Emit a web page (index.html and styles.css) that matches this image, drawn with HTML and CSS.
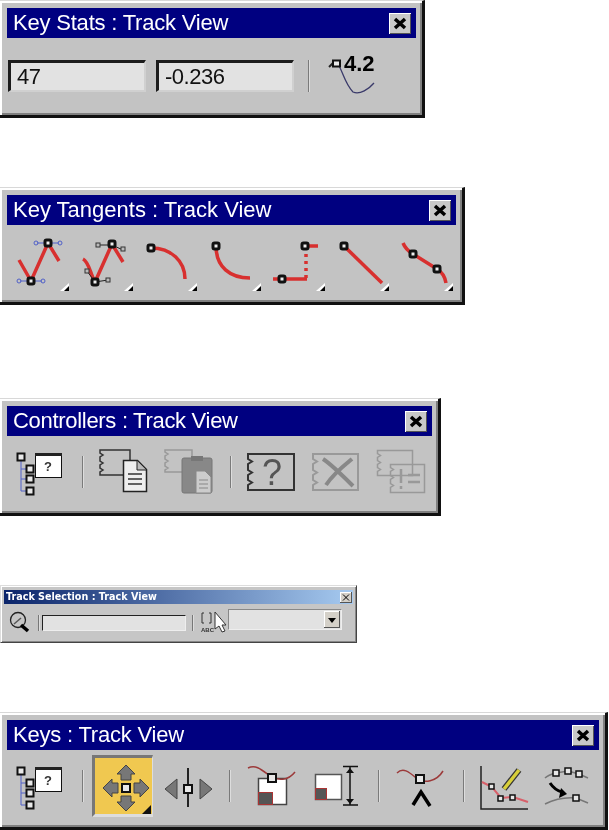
FILE: index.html
```html
<!DOCTYPE html>
<html lang="en">
<head>
  <meta charset="UTF-8" />
  <meta name="viewport" content="width=device-width, initial-scale=1.0" />
  <title>Track View Toolbars</title>
  <link rel="stylesheet" href="styles.css">
</head>
<body>
  <svg class="defs" width="0" height="0">
    <symbol id="close" viewBox="0 0 22 21">
      <path class="x" d="M6 6l10 9M16 6L6 15" />
    </symbol>
    <symbol id="corner" viewBox="0 0 9 8">
      <path fill="#fff" d="M9 0v8H0z" />
      <path fill="#000" d="M9 3v5H4z" />
    </symbol>
  </svg>

  <section class="win win-stats">
    <header class="title"><span>Key Stats : Track View</span><svg class="close"><use href="#close" /></svg></header>
    <div class="tools tools-stats">
      <div class="field">47</div>
      <div class="field">-0.236</div>
      <i class="sep"></i>
      <div class="stat-icon">
        <svg width="54" height="52" viewBox="326 50 54 52">
          <path class="thin" d="M338 64c5 8 7 20 15 28 7 3 16-3 21-9" />
          <path class="dark" d="M329 67l6-6" />
          <rect class="node" x="333" y="60.500" width="7" height="6" fill="#bbb" />
          <text class="stat-num" x="344" y="71">4.2</text>
        </svg>
      </div>
    </div>
  </section>

  <section class="win win-tangents">
    <header class="title"><span>Key Tangents : Track View</span><svg class="close"><use href="#close" /></svg></header>
    <div class="tools">
      <svg class="cell" viewBox="0 0 64 72">
        <path class="red" d="M11 35l12 21 17-38 11 18" />
        <path class="blue" d="M12 56h22M29 18h22" />
        <circle class="hnd-b" cx="11" cy="56" r="2" /><circle class="hnd-b" cx="35" cy="56" r="2" />
        <circle class="hnd-b" cx="28" cy="18" r="2" /><circle class="hnd-b" cx="52" cy="18" r="2" />
        <rect class="knot" x="20" y="53" width="6" height="6" /><rect class="knot" x="37" y="15" width="6" height="6" />
        <use href="#corner" x="52" y="58" width="9" height="8" />
      </svg>
      <svg class="cell" viewBox="0 0 64 72">
        <path class="red" d="M11 34c6 3 7 14 12 23l17-38 11 18" />
        <path class="line" d="M15 46l8 11 13-2M26 20h14l11 5" />
        <rect class="hnd" x="13" y="44" width="4" height="4" /><rect class="hnd" x="34" y="53" width="4" height="4" />
        <rect class="hnd" x="24" y="18" width="4" height="4" /><rect class="hnd" x="49" y="22" width="4" height="4" />
        <rect class="knot" x="20" y="54" width="6" height="6" /><rect class="knot" x="37" y="16" width="6" height="6" />
        <use href="#corner" x="52" y="58" width="9" height="8" />
      </svg>
      <svg class="cell" viewBox="0 0 64 72">
        <path class="red" d="M15 23c20 0 34 13 34 31" />
        <rect class="knot" x="12" y="20" width="6" height="6" />
        <use href="#corner" x="52" y="58" width="9" height="8" />
      </svg>
      <svg class="cell" viewBox="0 0 64 72">
        <path class="red" d="M16 21c0 21 14 32 34 32" />
        <rect class="knot" x="13" y="18" width="6" height="6" />
        <use href="#corner" x="52" y="58" width="9" height="8" />
      </svg>
      <svg class="cell" viewBox="0 0 64 72">
        <path class="red" d="M9 54h34M41 21h13" />
        <path class="red dots" d="M42 53V26" />
        <rect class="knot" x="15" y="51" width="6" height="6" /><rect class="knot" x="38" y="18" width="6" height="6" />
        <use href="#corner" x="52" y="58" width="9" height="8" />
      </svg>
      <svg class="cell" viewBox="0 0 64 72">
        <path class="red" d="M16 21l38 37" />
        <rect class="knot" x="13" y="18" width="6" height="6" />
        <use href="#corner" x="52" y="58" width="9" height="8" />
      </svg>
      <svg class="cell" viewBox="0 0 64 72">
        <path class="red" d="M11 18c2 5 5 8 10 11l24 15c5 3 8 8 9 14" />
        <rect class="knot" x="18" y="26" width="6" height="6" /><rect class="knot" x="42" y="41" width="6" height="6" />
        <use href="#corner" x="52" y="58" width="9" height="8" />
      </svg>
    </div>
  </section>

  <section class="win win-ctrl">
    <header class="title"><span>Controllers : Track View</span><svg class="close"><use href="#close" /></svg></header>
    <div class="tools">
      <svg class="cell" viewBox="8 436 64 72">
        <path class="blue" d="M21 457v34h9M21 469h9M21 479h9" />
        <rect class="node" x="17.500" y="453.500" width="7" height="7" />
        <rect class="node" x="26.500" y="465.500" width="7" height="7" />
        <rect class="node" x="26.500" y="475.500" width="7" height="7" />
        <rect class="node" x="26.500" y="487.500" width="7" height="7" />
        <rect x="35.500" y="453.500" width="26" height="24" fill="#fff" stroke="#111" />
        <rect x="35" y="453" width="27" height="3" fill="#222" />
        <text class="tree-q" x="48" y="471">?</text>
      </svg>
      <i class="sep sep-a"></i>
      <svg class="ctrl-a" width="64" height="72" viewBox="90 436 64 72">
        <path class="strip" d="M100 450h30v25h-30v-3l3-2-3-2v-3l3-2-3-2v-4l3-2-3-2v-3z" />
        <path d="M123.500 460.500h14l9 9v22h-23z" fill="#eee" stroke="#222" stroke-width="1.500" />
        <path d="M137 461v9h9" fill="#bbb" stroke="#222" />
        <path d="M128 474h14M128 479h14M128 484h14" stroke="#333" stroke-width="1.500" />
      </svg>
      <svg class="ctrl-b" width="64" height="72" viewBox="156 436 64 72">
        <path class="strip off" d="M165 450h27v22h-27v-2l3-2-3-2v-3l3-2-3-2v-3l3-2-3-2v-2z" />
        <rect x="182" y="458" width="30" height="35" rx="2" fill="#888" stroke="#777" />
        <rect x="191" y="456" width="12" height="5" fill="#777" />
        <path d="M196 471h9l6 6v16h-15z" fill="#ccc" stroke="#888" />
        <path d="M199 480h9M199 484h9M199 488h9" stroke="#888" />
      </svg>
      <i class="sep sep-b"></i>
      <svg class="ctrl-d" width="54" height="72" viewBox="244 436 54 72">
        <path class="book-line" d="M248 454h46v36h-46v-5l4-2.500-4-2.500v-5l4-2.500-4-2.500v-6l4-2.500-4-2.500v-5z" />
        <text class="book-q" x="272" y="485">?</text>
      </svg>
      <svg class="ctrl-e" width="53" height="72" viewBox="309 436 53 72">
        <path class="book-line off" d="M313 454h45v36h-45v-5l4-2.500-4-2.500v-5l4-2.500-4-2.500v-6l4-2.500-4-2.500v-5z" />
        <path class="cross" d="M323 459c8 5 20 17 30 27" />
        <path class="cross" d="M352 459c-6 5-18 14-26 26" />
      </svg>
      <svg class="ctrl-c" width="64" height="72" viewBox="366 436 64 72">
        <path class="gray-line" d="M377.500 450.500h35v25h-35v-4l3-2-3-2v-3l3-2-3-2v-3l3-2-3-2z" />
        <path class="gray-line" d="M390.500 464.500h34v28h-34v-5l3-2-3-2v-4l3-2-3-2v-4l3-2-3-2z" fill="#c3c3c3" />
        <path class="gray-thick" d="M401 469v14M401 486v3M408 475h12M408 482h12" />
      </svg>
    </div>
  </section>

  <section class="win-small">
    <header class="title-small"><span>Track Selection : Track View</span>
      <i class="close-small"><svg width="12" height="11" viewBox="0 0 12 11"><path d="M3 2.500l6 6M9 2.500l-6 6" stroke="#000" /></svg></i>
    </header>
    <div class="tools-small">
      <svg class="s-find" width="24" height="24" viewBox="8 610 24 24">
        <circle cx="18" cy="620" r="7.500" fill="none" stroke="#222" stroke-width="1.300" />
        <path d="M14 624l7-6" stroke="#555" stroke-width="1.500" />
        <path d="M21 625l7 6" stroke="#000" stroke-width="3.500" />
      </svg>
      <i class="sep-small"></i>
      <div class="field-small"></div>
      <i class="sep-small"></i>
      <svg class="abc" width="30" height="26" viewBox="198 608 30 26">
        <path d="M204 613h-2v10h2M209 613h2v10h-2" fill="none" stroke="#333" />
        <text class="abc-text" x="201" y="632">ABC</text>
        <path d="M215 612v17l4-3 3 6 3-1-3-6h4z" fill="#fff" stroke="#333" />
      </svg>
      <div class="combo"><i class="combo-btn"><svg width="16" height="17" viewBox="0 0 16 17"><path d="M4 7h8l-4 5z" fill="#000" /></svg></i></div>
    </div>
  </section>

  <section class="win win-keys">
    <header class="title"><span>Keys : Track View</span><svg class="close"><use href="#close" /></svg></header>
    <div class="tools">
      <svg class="cell" viewBox="8 436 64 72">
        <path class="blue" d="M21 457v34h9M21 469h9M21 479h9" />
        <rect class="node" x="17.500" y="453.500" width="7" height="7" />
        <rect class="node" x="26.500" y="465.500" width="7" height="7" />
        <rect class="node" x="26.500" y="475.500" width="7" height="7" />
        <rect class="node" x="26.500" y="487.500" width="7" height="7" />
        <rect x="35.500" y="453.500" width="26" height="24" fill="#fff" stroke="#111" />
        <rect x="35" y="453" width="27" height="3" fill="#222" />
        <text class="tree-q" x="48" y="471">?</text>
      </svg>
      <i class="sep sep-a"></i>
      <div class="active">
        <svg width="57" height="56" viewBox="95 758 57 56">
          <path class="arrow" d="M126 765l9 9h-4v6h-10v-6h-4zM126 811l9-9h-4v-6h-10v6h-4zM103 788l9-9v4h6v10h-6v4zM149 788l-9-9v4h-6v10h6v4z" />
          <rect class="node" x="122" y="784" width="8" height="8" />
          <path fill="#111" d="M151 805v9h-9z" />
        </svg>
      </div>
      <svg class="k-slide" width="66" height="72" viewBox="155 749 66 72">
        <path d="M188 767v39" stroke="#222" stroke-width="2" />
        <path class="arrow" d="M165 788l12-10v20zM212 788l-12-10v20z" />
        <rect class="node" x="184" y="784" width="8" height="8" />
      </svg>
      <i class="sep sep-c"></i>
      <svg class="k-scale" width="52" height="72" viewBox="244 749 52 72">
        <rect x="258.500" y="777.500" width="28" height="26" fill="#fff" stroke="#444" stroke-width="1.500" />
        <rect x="258.500" y="791.500" width="14" height="12" fill="#555" stroke="#a33" />
        <path class="curve" d="M248 767c8-4 14 2 22 8 8 5 18 5 25-4" />
        <rect class="node" x="268" y="773" width="8" height="8" />
      </svg>
      <svg class="k-height" width="50" height="72" viewBox="312 749 50 72">
        <rect x="315.500" y="773.500" width="26" height="25" fill="#fff" stroke="#555" stroke-width="1.500" />
        <rect x="315.500" y="787.500" width="11" height="11" fill="#555" stroke="#a33" />
        <path d="M343 765.500h15M343 804h15M350 766v38" stroke="#111" stroke-width="1.500" />
        <path fill="#111" d="M350 767l-4 5h8zM350 803l-4-5h8z" />
      </svg>
      <i class="sep sep-d"></i>
      <svg class="k-peak" width="56" height="72" viewBox="392 749 56 72">
        <path class="curve" d="M397 772c6-6 12-1 18 4 9 8 22 4 28-6" />
        <rect class="node" x="416" y="774" width="8" height="8" />
        <path d="M413 804l8-13 9 14" fill="none" stroke="#000" stroke-width="3.500" />
      </svg>
      <i class="sep sep-e"></i>
      <svg class="k-draw" width="58" height="72" viewBox="474 749 58 72">
        <path d="M481 765v43h47" fill="none" stroke="#222" stroke-width="1.500" />
        <path class="curve pink" d="M482 781l10 5 9 11 12-1 15 5" />
        <rect class="node thin-node" x="489" y="783" width="5" height="5" />
        <rect class="node thin-node" x="498" y="795" width="5" height="5" />
        <rect class="node thin-node" x="510" y="794" width="5" height="5" />
        <path d="M504 788l15-19" stroke="#333" stroke-width="6" />
        <path d="M504 788l15-19" stroke="#d8cf3a" stroke-width="3.500" />
      </svg>
      <svg class="k-move" width="50" height="72" viewBox="542 749 50 72">
        <path class="gray-curve" d="M545 777c3-3 7-4 11-5l12-2 11 3 9 4M545 803c10-5 20-7 31-6l12 5" />
        <rect class="node thin-node" x="553" y="769" width="6" height="6" />
        <rect class="node thin-node" x="565" y="767" width="6" height="6" />
        <rect class="node thin-node" x="576" y="770" width="6" height="6" />
        <rect class="node thin-node" x="573" y="794" width="6" height="6" />
        <path d="M550 782c4 6 8 8 12 9" fill="none" stroke="#000" stroke-width="3" />
        <path fill="#000" d="M567 793l-8 4 2-10z" />
      </svg>
    </div>
  </section>
</body>
</html>
```

FILE: styles.css
```css
html, body { margin: 0; padding: 0; }
body {
  background: #fff;
  font-family: 'Liberation Sans', Arial, sans-serif;
  height: 830px;
  overflow: hidden;
}
.defs { position: absolute; }

/* large windows */
.win {
  box-sizing: border-box;
  height: 118px;
  background: #c3c3c3;
  border-top: 1px solid #d8d8d8;
  border-right: 3px solid #111;
  border-bottom: 3px solid #111;
  box-shadow: inset 2px 2px #fff, inset -2px -2px #808080;
  padding: 7px 6px 0 7px;
  filter: blur(0.5px);
}
.win-stats { width: 425px; }
.win-tangents { width: 465px; margin-top: 69px; }
.win-ctrl { width: 441px; margin-top: 93px; }
.win-keys { width: 608px; margin-top: 69px; }

.title {
  height: 30px;
  background: #000080;
  color: #fff;
  font-size: 22px;
  letter-spacing: -0.2px;
  line-height: 30px;
  padding: 0 5px 0 6px;
  display: flex;
  justify-content: space-between;
  align-items: center;
}
.win-tangents .title { letter-spacing: 0; }
.win-ctrl .title { letter-spacing: -0.3px; }
.close {
  width: 22px;
  height: 21px;
  background: #c8c8c8;
  box-shadow: inset 1px 1px #fff, inset -1px -1px #555;
}
.x { stroke: #000; stroke-width: 3.5; fill: none; }

.tools { display: flex; align-items: center; height: 72px; margin-left: 1px; }
.tools-stats { margin-top: 2px; }
.cell { width: 64px; height: 72px; flex: none; }

.field {
  box-sizing: border-box;
  width: 138px;
  height: 32px;
  margin-right: 10px;
  background: #e2e2e2;
  border-top: 3px solid #1c1c1c;
  border-left: 3px solid #1c1c1c;
  border-right: 2px solid #d0d0d0;
  border-bottom: 2px solid #d0d0d0;
  font-size: 22px;
  letter-spacing: -0.5px;
  line-height: 27px;
  padding-left: 6px;
  color: #111;
}
.sep {
  width: 1px;
  height: 32px;
  background: #7a7a7a;
  border-right: 1px solid #ddd;
  flex: none;
}
.tools-stats .sep { margin-left: 4px; }
.stat-icon { margin-left: 16px; height: 52px; }
.stat-num { font-size: 22px; font-weight: bold; fill: #000; }

/* icon strokes */
.red { stroke: #d8302f; stroke-width: 3.5; fill: none; }
.dots { stroke-dasharray: 3 4; }
.blue { stroke: #5060c8; stroke-width: 1; fill: none; }
.line { stroke: #222; stroke-width: 1; fill: none; }
.hnd-b { fill: none; stroke: #5060c8; }
.hnd { fill: #bbb; stroke: #333; }
.node { fill: #e8e8e8; stroke: #111; stroke-width: 2; }
.knot { fill: #eee; stroke: #111; stroke-width: 3; rx: 1.5px; }
.thin { stroke: #3a3a6a; stroke-width: 1.3; fill: none; }
.dark { stroke: #222; stroke-width: 2; }
.tree-q { font-size: 13px; font-weight: bold; text-anchor: middle; fill: #333; }
.strip { fill: none; stroke: #333; stroke-width: 1.500; }
.strip.off { stroke: #999; }
.book-line { fill: none; stroke: #333; stroke-width: 2; }
.book-line.off { stroke: #999; }
.book-q { font-size: 36px; text-anchor: middle; fill: #555; }
.cross { stroke: #888; stroke-width: 4; fill: none; }
.gray-line { fill: none; stroke: #999; stroke-width: 1.500; }
.gray-thick { stroke: #999; stroke-width: 2.500; fill: none; }
.arrow { fill: #777; stroke: #444; stroke-width: 1; }
.curve { stroke: #9c3a3a; stroke-width: 1.500; fill: none; }
.pink { stroke: #d8606a; stroke-width: 2; }
.gray-curve { stroke: #777; stroke-width: 1.500; fill: none; }
.thin-node { stroke-width: 1.500; }

/* controllers row */
.sep-a { margin-left: 10px; }
.ctrl-a { margin-left: 6px; flex: none; }
.ctrl-b { margin-left: 2px; flex: none; }
.sep-b { margin-left: 10px; }
.ctrl-d { margin-left: 12px; flex: none; }
.ctrl-e { margin-left: 11px; flex: none; }
.ctrl-c { margin-left: 4px; flex: none; }

/* small window */
.win-small {
  box-sizing: border-box;
  width: 357px;
  height: 58px;
  margin-top: 69px;
  background: #c6c6c6;
  border-top: 1px solid #ddd;
  border-right: 1px solid #444;
  border-bottom: 1px solid #444;
  border-left: 1px solid #ddd;
  box-shadow: inset 1px 1px #fff, inset -1px -1px #888;
  padding: 4px 3px 0 3px;
  filter: blur(0.3px);
}
.title-small {
  height: 14px;
  background: linear-gradient(to right, #0a246a, #a6caf0);
  color: #fff;
  font-family: 'DejaVu Sans', sans-serif;
  font-size: 9.6px;
  font-weight: bold;
  line-height: 14px;
  padding-left: 2px;
  display: flex;
  justify-content: space-between;
  align-items: center;
}
.close-small {
  width: 12px;
  height: 11px;
  margin-right: 1px;
  background: #d4d0c8;
  box-shadow: inset -1px -1px #555, inset 1px 1px #fff;
}
.close-small svg, .combo-btn svg { display: block; }
.tools-small { display: flex; align-items: flex-start; height: 33px; padding-left: 4px; }
.s-find { margin-top: 6px; flex: none; }
.sep-small { width: 1px; height: 16px; margin: 11px 2px 0 6px; background: #777; border-right: 1px solid #ddd; flex: none; }
.field-small {
  box-sizing: border-box;
  width: 144px;
  height: 16px;
  margin-top: 11px;
  background: #e2e2e2;
  border-top: 1px solid #222;
  border-left: 1px solid #222;
  border-right: 1px solid #eee;
  border-bottom: 1px solid #eee;
}
.abc { margin: 4px 0 0 2px; flex: none; }
.abc-text { font-size: 6px; font-weight: bold; fill: #333; }
.combo {
  box-sizing: border-box;
  width: 114px;
  height: 21px;
  margin-top: 5px;
  background: #e2e2e2;
  border: 1px solid #888;
  border-right-color: #eee;
  border-bottom-color: #eee;
  display: flex;
  justify-content: flex-end;
  padding: 1px;
}
.combo-btn {
  width: 16px;
  background: #d4d0c8;
  box-shadow: inset -1px -1px #555, inset 1px 1px #fff;
}

/* keys row */
.active {
  box-sizing: border-box;
  width: 61px;
  height: 62px;
  margin-left: 8px;
  background: #f0c850;
  border-top: 3px solid #777;
  border-left: 3px solid #777;
  border-right: 1px solid #ddd;
  border-bottom: 3px solid #ddd;
  flex: none;
}
.active svg { display: block; }
.k-slide { margin-left: 2px; flex: none; }
.sep-c { margin-left: 8px; }
.k-scale { margin-left: 13px; flex: none; }
.k-height { margin-left: 16px; flex: none; }
.sep-d { margin-left: 16px; }
.k-peak { margin-left: 12px; flex: none; }
.sep-e { margin-left: 15px; }
.k-draw { margin-left: 9px; flex: none; }
.k-move { margin-left: 10px; flex: none; }
```
